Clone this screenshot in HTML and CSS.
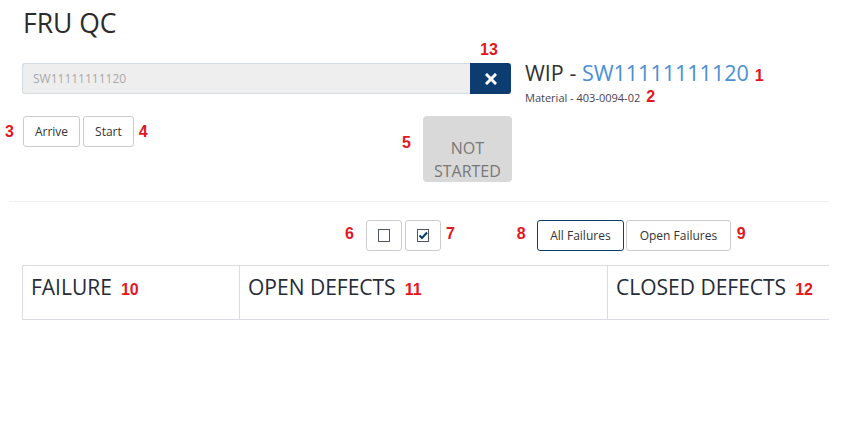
FILE: index.html
```html
<!DOCTYPE html>
<html lang="en">
<head>
<meta charset="utf-8">
<title>FRU QC</title>
<link rel="stylesheet" href="styles.css">
</head>
<body>
<div class="page">
  <h1 class="title">FRU QC</h1>

  <div class="search-row">
    <div class="search">
      <div class="search-input">SW11111111120</div>
      <button class="clear-btn" type="button">
        <span class="mark mark-top">13</span>
        <svg width="12" height="12" viewBox="0 0 12 12"><path d="M2 2 L10 10 M10 2 L2 10" stroke="#fff" stroke-width="3" stroke-linecap="square"/></svg>
      </button>
    </div>
    <div class="wip">
      <div class="wip-title">WIP - <span class="wip-id">SW11111111120</span><span class="mark mark-inline">1</span></div>
      <div class="wip-material">Material - 403-0094-02<span class="mark mark-inline">2</span></div>
    </div>
  </div>

  <div class="actions-row">
    <div class="actions">
      <span class="mark">3</span>
      <div class="btn-group">
        <button class="btn" type="button">Arrive</button>
        <button class="btn" type="button">Start</button>
      </div>
      <span class="mark">4</span>
    </div>
    <div class="status-group">
      <span class="mark mark-status">5</span>
      <div class="status">NOT<br>STARTED</div>
    </div>
  </div>

  <hr class="divider">

  <div class="filters">
    <span class="mark">6</span>
    <div class="btn-group">
      <button class="btn btn-icon" type="button"><svg width="12" height="13" viewBox="0 0 12 13"><rect x="0.5" y="0.5" width="11" height="12" fill="none" stroke="#4d5561"/></svg></button>
      <button class="btn btn-icon" type="button"><svg width="12" height="13" viewBox="0 0 12 13"><rect x="0.5" y="0.5" width="11" height="12" fill="none" stroke="#4d5561"/><path d="M2.5 6.5 L5 9 L10 3.5" fill="none" stroke="#0d3d70" stroke-width="2"/></svg></button>
    </div>
    <span class="mark mark-7">7</span>
    <span class="mark mark-8">8</span>
    <div class="btn-group failures">
      <button class="btn btn-active" type="button">All Failures</button>
      <button class="btn" type="button">Open Failures</button>
    </div>
    <span class="mark">9</span>
  </div>

  <div class="defects">
    <div class="defects-head">FAILURE<span class="mark mark-head">10</span></div>
    <div class="defects-head">OPEN DEFECTS<span class="mark mark-head">11</span></div>
    <div class="defects-head">CLOSED DEFECTS<span class="mark mark-head">12</span></div>
  </div>
</div>
</body>
</html>
```

FILE: styles.css
```css
* { box-sizing: border-box; }

body {
  margin: 0;
  background: #fff;
  font-family: "Open Sans", "Liberation Sans", sans-serif;
  color: #333;
}

.page {
  width: 852px;
  padding-top: 5px;
}

.title {
  margin: 0 0 0 23px;
  font-size: 26.5px;
  line-height: 36px;
  font-weight: 400;
  color: #2b2b2b;
}

.mark {
  font-family: "Liberation Sans", Arial, sans-serif;
  font-weight: 700;
  font-size: 16px;
  color: #e5161e;
  line-height: 1;
}

/* search row */
.search-row {
  display: flex;
  align-items: flex-start;
  margin: 22px 0 0 22px;
}

.search {
  display: flex;
}

.search-input {
  width: 448px;
  height: 31px;
  padding-left: 10px;
  background: #eee;
  border: 1px solid #d4dbe3;
  border-right: none;
  border-radius: 3px 0 0 3px;
  font-size: 12px;
  line-height: 29px;
  color: #a9a9a9;
}

.clear-btn {
  position: relative;
  width: 41px;
  height: 31px;
  padding: 0;
  border: none;
  border-radius: 0 3px 3px 0;
  background: #0d3d70;
  display: flex;
  align-items: center;
  justify-content: center;
}

.mark-top {
  position: absolute;
  top: -21px;
  left: 10px;
}

.wip {
  margin-left: 14px;
}

.wip-title {
  font-size: 21.5px;
  line-height: 20px;
  color: #333;
}

.wip-id {
  color: #4a8fd4;
}

.mark-inline {
  margin-left: 6px;
}

.wip-material {
  margin-top: 5px;
  font-size: 11px;
  line-height: 16px;
  color: #4a4250;
}

/* actions */
.actions-row {
  display: flex;
  align-items: flex-start;
  margin: 10px 0 0 5px;
}

.actions {
  width: 397px;
  display: flex;
  align-items: center;
  gap: 5px;
}

.actions .btn-group {
  margin-left: 4px;
}

.btn-group {
  display: flex;
  gap: 3px;
}

.btn {
  height: 31px;
  padding: 0 11px;
  background: #fff;
  border: 1px solid #ccc;
  border-radius: 3px;
  font-family: "Open Sans", "Liberation Sans", sans-serif;
  font-size: 12px;
  color: #333;
  display: flex;
  align-items: center;
}

.btn-icon {
  width: 36px;
  justify-content: center;
}

.btn-active {
  border-color: #0d3d70;
}

.failures {
  gap: 2px;
}

.failures .btn {
  padding: 0 12.5px;
}

.status-group {
  display: flex;
  align-items: flex-start;
  gap: 12px;
}

.mark-status {
  margin-top: 19px;
}

.status {
  width: 89px;
  height: 66px;
  padding-top: 21px;
  background: #d9d9d9;
  border-radius: 4px;
  color: #787878;
  font-size: 16px;
  line-height: 23px;
  text-align: center;
}

.divider {
  margin: 19px 0 0 9px;
  width: 820px;
  border: none;
  border-top: 1px solid #eee;
  height: 0;
}

/* filters */
.filters {
  display: flex;
  align-items: center;
  margin: 18px 0 0 345px;
}

.filters > .mark {
  margin-top: -3px;
}

.filters > .btn-group:first-of-type {
  margin-left: 12px;
}

.mark-7 {
  margin-left: 5px;
}

.mark-8 {
  margin-left: 62px;
  margin-right: 11px;
}

.filters > .mark:last-child {
  margin-left: 6px;
}

/* defects table */
.defects {
  display: grid;
  grid-template-columns: 217px 368px 222px;
  width: 807px;
  margin: 14px 0 0 22px;
  border-top: 1px solid #dcdde4;
  border-bottom: 1px solid #dcdde4;
}

.defects-head {
  height: 53px;
  padding: 6px 0 0 8px;
  border-left: 1px solid #dcdde4;
  font-size: 21px;
  line-height: 30px;
  color: #262b38;
  white-space: nowrap;
}

.mark-head {
  margin-left: 9px;
}
```
